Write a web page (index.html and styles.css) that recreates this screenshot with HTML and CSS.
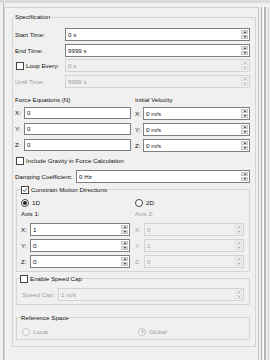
FILE: index.html
```html
<!DOCTYPE html>
<html>
<head>
<meta charset="UTF-8">
<title>Specification</title>
<link rel="stylesheet" href="styles.css">
</head>
<body>

<div class="window">
<div class="edge"></div>

<div class="pane">

<fieldset class="group spec">
<legend>Specification</legend>

<!-- TIMES -->
<div class="rows">
<div class="row">
<span class="lbl">Start Time:</span>
<div class="spin"><input value="0 s"><span class="arrows"><i class="up"></i><i class="down"></i></span></div>
</div>
<div class="row">
<span class="lbl">End Time:</span>
<div class="spin"><input value="9999 s"><span class="arrows"><i class="up"></i><i class="down"></i></span></div>
</div>
<div class="row">
<span class="lbl"><span class="check"></span>Loop Every:</span>
<div class="spin off"><input value="0 s" disabled><span class="arrows"><i class="up"></i><i class="down"></i></span></div>
</div>
<div class="row">
<span class="lbl dim">Until Time:</span>
<div class="spin off"><input value="9999 s" disabled><span class="arrows"><i class="up"></i><i class="down"></i></span></div>
</div>
</div>

<!-- FORCE / VELOCITY -->
<div class="cols">
<div class="col force">
<div class="title">Force Equations (N)</div>
<div class="xyz">
<div class="axis"><span>X:</span><div class="text"><input value="0"></div></div>
<div class="axis"><span>Y:</span><div class="text"><input value="0"></div></div>
<div class="axis"><span>Z:</span><div class="text"><input value="0"></div></div>
</div>
</div>
<div class="col vel">
<div class="title">Initial Velocity</div>
<div class="xyz">
<div class="axis"><span>X:</span><div class="spin"><input value="0 m/s"><span class="arrows"><i class="up"></i><i class="down"></i></span></div></div>
<div class="axis"><span>Y:</span><div class="spin"><input value="0 m/s"><span class="arrows"><i class="up"></i><i class="down"></i></span></div></div>
<div class="axis"><span>Z:</span><div class="spin"><input value="0 m/s"><span class="arrows"><i class="up"></i><i class="down"></i></span></div></div>
</div>
</div>
</div>

<div class="checkrow gravity"><span class="check"></span>Include Gravity in Force Calculation</div>

<div class="row damping">
<span class="lbl">Damping Coefficient:</span>
<div class="spin"><input value="0 Hz"><span class="arrows"><i class="up"></i><i class="down"></i></span></div>
</div>

<!-- CONSTRAIN -->
<fieldset class="group inner constrain">
<legend><span class="check on"><svg viewBox="0 0 8 8"><path d="M1.5 4.2 L3.2 6 L6.6 1.8" /></svg></span>Constrain Motion Directions</legend>

<div class="cols2">
<div class="col">
<div class="opt"><span class="radio on"></span>1D</div>
<div class="title">Axis 1:</div>
<div class="xyz">
<div class="axis"><span>X:</span><div class="spin"><input value="1"><span class="arrows"><i class="up"></i><i class="down"></i></span></div></div>
<div class="axis"><span>Y:</span><div class="spin"><input value="0"><span class="arrows"><i class="up"></i><i class="down"></i></span></div></div>
<div class="axis"><span>Z:</span><div class="spin"><input value="0"><span class="arrows"><i class="up"></i><i class="down"></i></span></div></div>
</div>
</div>
<div class="col">
<div class="opt"><span class="radio"></span>2D</div>
<div class="title dim">Axis 2:</div>
<div class="xyz dim">
<div class="axis"><span>X:</span><div class="spin off"><input value="0" disabled><span class="arrows"><i class="up"></i><i class="down"></i></span></div></div>
<div class="axis"><span>Y:</span><div class="spin off"><input value="1" disabled><span class="arrows"><i class="up"></i><i class="down"></i></span></div></div>
<div class="axis"><span>Z:</span><div class="spin off"><input value="0" disabled><span class="arrows"><i class="up"></i><i class="down"></i></span></div></div>
</div>
</div>
</div>
</fieldset>

<!-- SPEED CAP -->
<fieldset class="group inner speed">
<legend><span class="check"></span>Enable Speed Cap</legend>
<div class="row cap">
<span class="lbl dim">Speed Cap:</span>
<div class="spin off"><input value="1 m/s" disabled><span class="arrows"><i class="up"></i><i class="down"></i></span></div>
</div>
</fieldset>

<!-- REFERENCE -->
<fieldset class="group inner ref">
<legend>Reference Space</legend>
<div class="cols2 dim">
<div class="opt"><span class="radio off"></span>Local</div>
<div class="opt"><span class="radio off on"></span>Global</div>
</div>
</fieldset>

</fieldset>

</div>

<div class="scroll"></div>
</div>

</body>
</html>
```

FILE: styles.css
```css
body{
margin:0;
background:#f0f0f0;
font-family:"Liberation Sans", Arial, sans-serif;
font-size:6.2px;
color:#111;
}

/* WINDOW CHROME */
.window{
display:flex;
height:360px;
box-sizing:border-box;
border-top:3px solid #dcdcdc;
overflow:hidden;
}

.edge{
width:3px;
border-right:1px solid #b9b9b9;
}

.pane{
width:255px;
box-sizing:border-box;
margin-top:4px;
border-top:1px solid #d2d2d2;
border-left:1px solid #d2d2d2;
border-right:1px solid #c4c4c4;
padding:5px 2px 0 7px;
}

.scroll{
width:11px;
margin-top:4px;
background:linear-gradient(90deg,#f0f0f0 0 2px,#a9a9a9 2px 3px,#fafafa 3px 5px,#b5b5b5 5px 7px,#f0f0f0 7px 9px,#d0d0d0 9px 10px,#f0f0f0 10px);
}

/* GROUP BOXES */
.group{
margin:0;
border:1px solid #d5d5d5;
box-sizing:border-box;
min-width:0;
}

.group legend{
padding:0;
line-height:8px;
height:8px;
display:flex;
align-items:center;
}

.spec{
width:244px;
padding:7px 4px 6px 2px;
}

.spec > legend{
padding:0 1px;
margin-left:-1px;
}

.inner{
width:234px;
margin-left:1px;
}

.constrain{
margin-top:4px;
padding:5px 4px 4px 4px;
}

.constrain legend .check{
margin-right:2px;
}

.speed{
margin-top:3px;
padding:5px 4px 3px 3px;
}

.ref{
margin-top:9px;
padding:6px 4px 3px 4px;
}

/* ROWS */
.rows{
display:flex;
flex-direction:column;
gap:3.6px;
}

.row{
display:grid;
grid-template-columns:50px 185px;
align-items:center;
height:12px;
}

.lbl{
display:flex;
align-items:center;
white-space:nowrap;
}

.lbl .check{
margin-left:1px;
margin-right:2px;
}

.damping{
grid-template-columns:61px 174px;
margin-top:5px;
}

.cap{
grid-template-columns:36px 186px;
height:13px;
margin-left:2px;
}

.dim{
color:#9d9d9d;
}

/* INPUTS */
.spin,.text{
display:flex;
height:100%;
box-sizing:border-box;
border:1px solid #7e7e7e;
background:#fff;
}

.spin input,.text input{
flex:1;
min-width:0;
border:none;
background:transparent;
padding:0 0 0 2px;
margin:0;
font:inherit;
color:#111;
outline:none;
}

.arrows{
width:7px;
display:flex;
flex-direction:column;
gap:1px;
padding:1px 1px 1px 0;
}

.arrows i{
flex:1;
background:#e4e4e4;
border:1px solid #c4c4c4;
display:flex;
align-items:center;
justify-content:center;
}

.arrows i::after{
content:"";
border-left:1.5px solid transparent;
border-right:1.5px solid transparent;
}

.arrows .up::after{border-bottom:2px solid #222;}
.arrows .down::after{border-top:2px solid #222;}

.off{
border-color:#d3d3d3;
background:#f0f0f0;
}

.off input{
color:#9d9d9d;
}

.off .arrows i{
background:#f0f0f0;
border-color:#e0e0e0;
}

.off .arrows .up::after{border-bottom-color:#a5a5a5;}
.off .arrows .down::after{border-top-color:#a5a5a5;}

/* FORCE / VELOCITY */
.cols{
display:grid;
grid-template-columns:116px 115px;
column-gap:4px;
margin-top:9px;
}

.title{
height:8px;
line-height:8px;
}

.xyz{
display:flex;
flex-direction:column;
gap:4px;
margin-top:3px;
}

.axis{
display:grid;
align-items:center;
height:12px;
}

.force .axis{grid-template-columns:9px 107px;}
.vel .axis{grid-template-columns:8px 107px;}

/* CHECKS AND RADIOS */
.checkrow{
display:flex;
align-items:center;
height:8px;
margin-top:6px;
}

.gravity .check{
margin-left:1px;
margin-right:2px;
}

.check{
display:inline-flex;
width:8px;
height:8px;
box-sizing:border-box;
border:1px solid #444;
background:#fff;
}

.check svg{
width:100%;
height:100%;
fill:none;
stroke:#222;
stroke-width:1.1;
}

.speed legend .check{
margin-right:2px;
}

.radio{
display:inline-grid;
place-items:center;
width:8px;
height:8px;
box-sizing:border-box;
border:1px solid #444;
border-radius:50%;
background:#fff;
margin-right:3px;
}

.radio.on::after{
content:"";
width:4px;
height:4px;
border-radius:50%;
background:#222;
}

.radio.off{
border-color:#c4c4c4;
background:#f4f4f4;
}

.radio.off.on::after{
background:#c4c4c4;
width:3px;
height:3px;
}

/* CONSTRAIN */
.cols2{
display:grid;
grid-template-columns:109px 110px;
column-gap:5px;
}

.opt{
display:flex;
align-items:center;
height:8px;
}

.constrain .title{
margin-top:3px;
}

.constrain .xyz{
margin-top:5px;
}

.constrain .axis{
grid-template-columns:9px 100px;
}

.ref .cols2{
grid-template-columns:111px 110px;
margin-left:1px;
}
```
